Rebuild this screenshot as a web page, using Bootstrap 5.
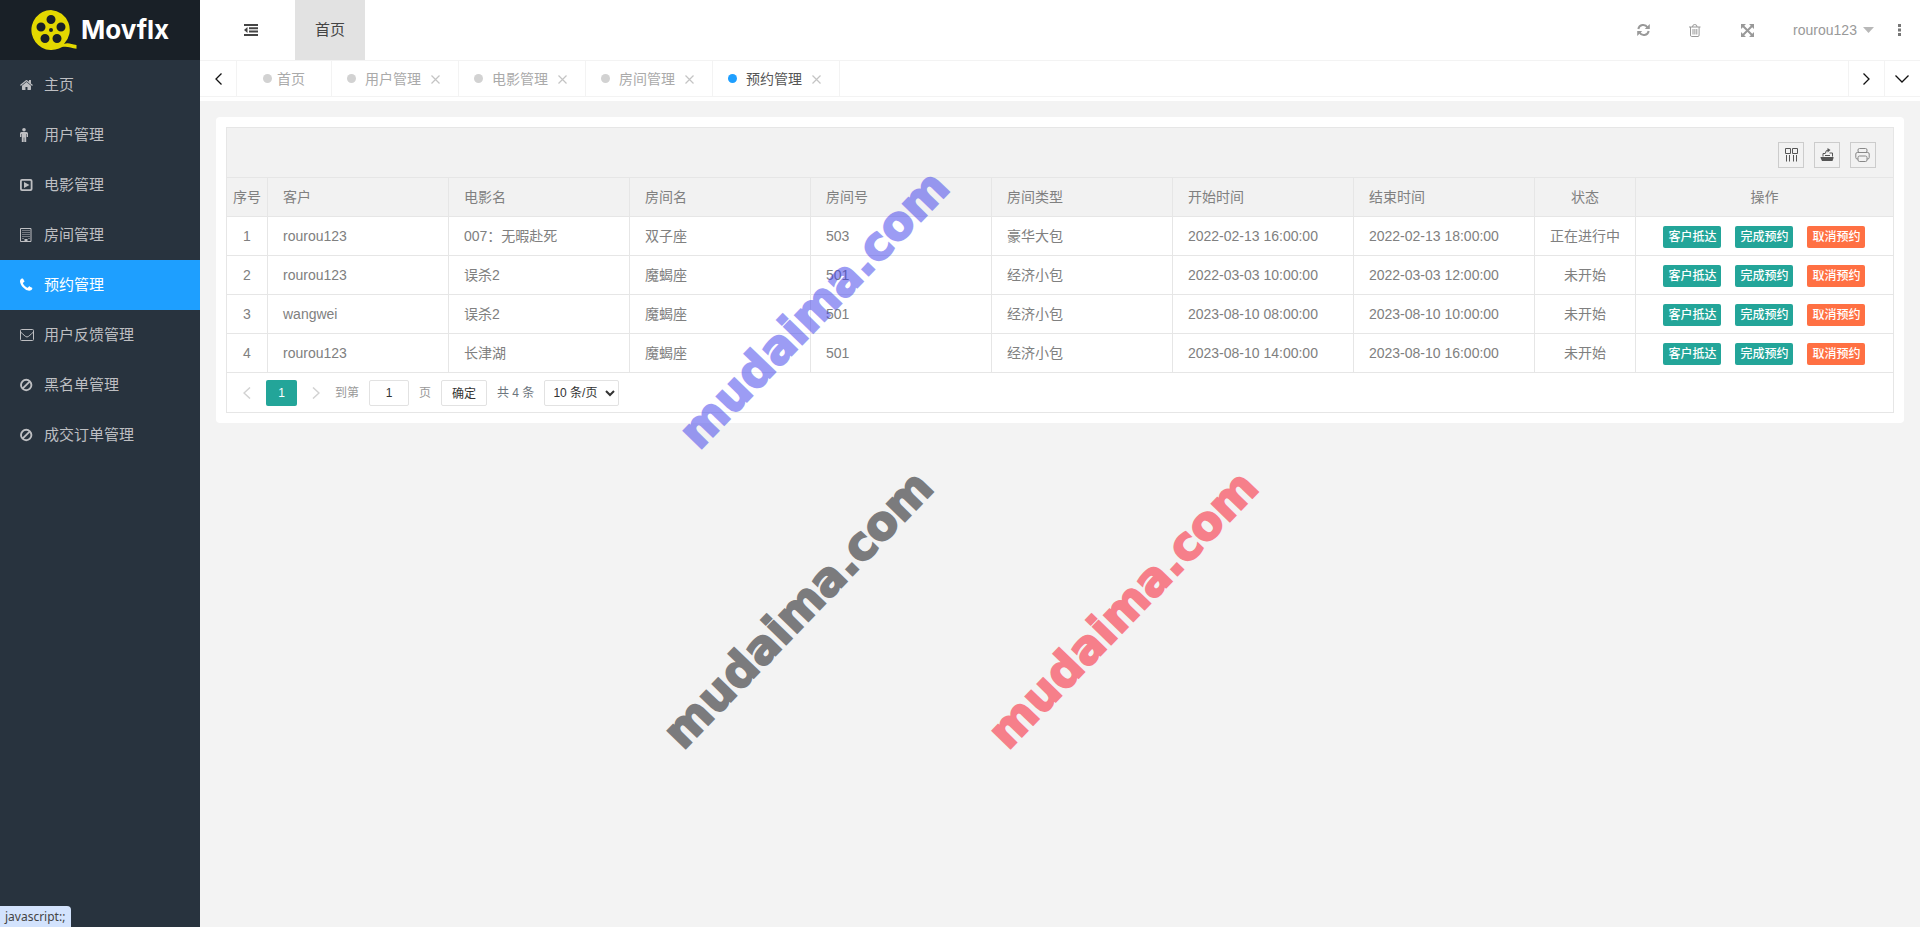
<!DOCTYPE html>
<html lang="zh-CN">
<head>
<meta charset="utf-8">
<meta name="viewport" content="width=device-width, initial-scale=1">
<title>预约管理</title>
<link href="https://cdn.jsdelivr.net/npm/bootstrap@5.3.0/dist/css/bootstrap.min.css" rel="stylesheet">
<style>
body{font-family:"Liberation Sans","Noto Sans CJK SC",sans-serif;font-size:14px;line-height:20px;color:#666;background:#f3f3f3}
svg{display:block;fill:currentColor;flex:none}
button{font-family:inherit}
a{color:inherit;text-decoration:none}
.plain{background:none;border:0;color:inherit;padding:0}
.side{width:200px;background:#28333e}
.logo-bar{height:60px;background:#192027;color:#fff;padding-left:31px;gap:4px}
.logo-word{font:700 26px/30px Inter,sans-serif}
.side .nav-link{height:50px;padding:0 20px;color:#bebfc2;font-size:15px;gap:10px}
.side .nav-link svg{width:14px}
.side .nav-link.active{background:#1e9fff;color:#fff}
.top-bar{height:60px;background:#fff;color:#999}
.fold-btn{width:95px;padding-left:44px;color:#444}
.top-home{padding:0 20px;background:#e2e2e2;color:#444;font-size:15px}
.tool-cell{width:52px}
.user-cell{padding:0 6px 0 20px;gap:6px}
.more-cell{width:40px}
.tab-bar{height:41px;background:#fff;padding-bottom:4px}
.tab-strip{border-top:1px solid #f3f3f3;border-bottom:1px solid #f3f3f3;height:37px}
.edge-btn{width:35px;color:#111}
.edge-btn.start{width:37px;border-right:1px solid #f3f3f3}
.edge-btn.end{width:36px;border-left:1px solid #f3f3f3}
.page-tab{padding:0 18px 0 15px;border-right:1px solid #f3f3f3;color:#aaa}
.page-tab.first{padding-left:26px;padding-right:26px}
.page-tab.current{color:#555}
.dot{width:9px;height:9px;border-radius:50%;background:#d2d2d2;margin-right:9px}
.first .dot{margin-right:5px}
.current .dot{background:#1e9fff}
.tab-close{color:#c4c4c4;margin-left:10px;padding-top:2px}
.content{padding:16px}
.panel{background:#fff;border-radius:4px;padding:10px}
.frame{border:1px solid #e6e6e6}
.grid-tools{height:50px;background:#f2f2f2;border-bottom:1px solid #e6e6e6;padding-right:17px;padding-top:4px;gap:10px}
.grid-tools button{width:26px;height:26px;border:1px solid #ccc;color:#555}
.grid{table-layout:fixed;border-collapse:separate;border-spacing:0;margin:0;color:#808080}
.grid th,.grid td{height:39px;padding:0 15px;border:0;border-bottom:1px solid #e6e6e6;border-right:1px solid #e6e6e6;font-weight:400;color:#808080;vertical-align:middle;white-space:nowrap}
.grid th{background:#f2f2f2}
.grid th:last-child,.grid td:last-child{border-right:0}
.grid .mid{text-align:center;padding:0 5px}
.acts{gap:14px;padding-top:2px}
.act{height:22px;width:58px;padding:0;border:0;border-radius:2px;background:#23a599;color:#fff;font-size:12px;font-weight:500;line-height:22px}
.act.cancel{background:#ff7043}
.pager{height:39px;padding-left:1px;font-size:12px;color:#999}
.pager .cell{width:38px;height:26px;color:#d2d2d2}
.pager .cell.on{width:31px;background:#23a599;color:#fff;border-radius:2px}
.pager .box{height:26px;border:1px solid #e2e2e2;border-radius:2px;background:#fff;color:#333;font:12px "Liberation Sans","Noto Sans CJK SC",sans-serif;margin:0 10px;padding:0}
.pager input.box{width:40px;text-align:center}
.pager button.box{width:46px}
.pager select.box{width:75px;padding:0 4px}
.mark-layer{inset:0;overflow:hidden;pointer-events:none;z-index:5}
.wm{position:absolute;font:700 46px/60px "DejaVu Sans",sans-serif;-webkit-text-stroke:2px currentColor;transform-origin:0 46px;transform:rotate(-46deg);white-space:nowrap}
.wm.blue{color:#3c3ceb;opacity:.5}
.hint{left:0;bottom:0;height:21px;padding:0 6px 0 5px;background:#d3e3fd;color:#444;border-top-right-radius:4px;font:12px/22px "Noto Sans",sans-serif;z-index:9}
</style>
</head>
<body>
<div class="d-flex min-vh-100 position-relative">
<aside class="side flex-shrink-0">
  <a href="#" class="logo-bar d-flex align-items-center">
    <svg width="46" height="42" viewBox="0 0 46 42"><path fill="#e3d800" fill-rule="evenodd" d="M20 1a20 20 0 1 0 8 38.500C34 36 39 39 45.500 39.800V36C40 35 37 33 33 35A20 20 0 0 0 20 1zM20 6a4.500 4.500 0 1 1 0 9 4.500 4.500 0 0 1 0-9zM10 13.500a4.500 4.500 0 1 1 0 9 4.500 4.500 0 0 1 0-9zM30 13.500a4.500 4.500 0 1 1 0 9 4.500 4.500 0 0 1 0-9zM14 25a4.500 4.500 0 1 1 0 9 4.500 4.500 0 0 1 0-9zM26 25a4.500 4.500 0 1 1 0 9 4.500 4.500 0 0 1 0-9zM20 19a2 2 0 1 1 0 4 2 2 0 0 1 0-4z"/></svg>
    <span class="logo-word">Movflx</span>
  </a>
  <nav class="nav flex-column flex-nowrap">
    <a class="nav-link d-flex align-items-center" href="#"><svg height="14" viewBox="90 0 1620 1792"><path d="M1408 992v480q0 26-19 45t-45 19h-384v-384h-256v384h-384q-26 0-45-19t-19-45v-480q0-1 .5-3t.5-3l575-474 575 474q1 2 1 6zm223-69l-62 74q-8 9-21 11h-3q-13 0-21-7l-692-577-692 577q-12 8-24 7-13-2-21-11l-62-74q-8-10-7-23.500t11-21.500l719-599q32-26 76-26t76 26l244 204v-195q0-14 9-23t23-9h192q14 0 23 9t9 23v408l219 182q10 8 11 21.500t-7 23.500z"/></svg>主页</a>
    <a class="nav-link d-flex align-items-center" href="#"><svg height="14" viewBox="0 0 14 14"><circle cx="4" cy="1.800" r="1.800"/><path d="M1.500 4h5Q8 4 8 5.500V9H6.700V6h-.5v8H4.300V9.500h-.6V14H1.800V6h-.5v3H0V5.500Q0 4 1.500 4z"/></svg>用户管理</a>
    <a class="nav-link d-flex align-items-center" href="#"><svg height="14" viewBox="0 0 14 14"><path fill-rule="evenodd" d="M2 1h8.500q2 0 2 2v8q0 2-2 2H2q-2 0-2-2V3q0-2 2-2zm.4 1.800q-.6 0-.6.6v7.200q0 .6.6.6h7.700q.6 0 .6-.6V3.400q0-.6-.6-.6zM4 4l5.500 3L4 10z"/></svg>电影管理</a>
    <a class="nav-link d-flex align-items-center" href="#"><svg height="14" viewBox="0 0 14 14"><path fill="none" stroke="currentColor" d="M.5.5h10.500v13H.5z"/><path d="M2.500 2h1v1h-1zm2 0h1v1h-1zm2 0h1v1h-1zm2 0h1v1h-1zm-6 2h1v1h-1zm2 0h1v1h-1zm2 0h1v1h-1zm2 0h1v1h-1zm-6 2h1v1h-1zm2 0h1v1h-1zm2 0h1v1h-1zm2 0h1v1h-1zm-6 2h1v1h-1zm2 0h1v1h-1zm2 0h1v1h-1zm2 0h1v1h-1zm-6 2h1v1h-1zm6 0h1v1h-1zM4.500 11h3v2h-3z"/></svg>房间管理</a>
    <a class="nav-link active d-flex align-items-center" href="#"><svg height="14" viewBox="192 80 1600 1600"><path d="M1600 1240q0 27-10 70.500t-21 68.500q-21 50-122 106-94 51-186 51-27 0-52.500-3.500t-57.500-12.500-47.500-14.500-55.500-20.500-49-18q-98-35-175-83-128-79-264.500-215.500t-215.500-264.500q-48-77-83-175-3-9-18-49t-20.500-55.500-14.500-47.500-12.500-57.500-3.500-52.500q0-92 51-186 56-101 106-122 25-11 68.500-21t70.500-10q14 0 21 3 18 6 53 76 11 19 30 54t35 63.500 31 53.500q3 4 17.500 25t21.500 35.500 7 28.500q0 20-28.500 50t-62 55-62 53-28.500 46q0 9 5 22.500t8.500 20.500 14 24 11.500 19q76 137 174 235t235 174q2 1 19 11.500t24 14 20.500 8.500 22.500 5q18 0 46-28.500t53-62 55-62 50-28.500q14 0 28.500 7t35.500 21.500 25 17.500q25 15 53.500 31t63.500 35 54 30q70 35 76 53 3 7 3 21z"/></svg>预约管理</a>
    <a class="nav-link d-flex align-items-center" href="#"><svg height="14" viewBox="0 0 14 14"><g fill="none" stroke="currentColor"><rect x=".5" y="1.500" width="13" height="11" rx="1"/><path d="M.5 4C3 6 5.500 9 7 9s4-3 6.500-5"/></g></svg>用户反馈管理</a>
    <a class="nav-link d-flex align-items-center" href="#"><svg height="14" viewBox="0 0 14 14"><g fill="none" stroke="currentColor" stroke-width="1.900"><circle cx="6.200" cy="7" r="5.200"/><path d="M2.500 10.700l7.400-7.400"/></g></svg>黑名单管理</a>
    <a class="nav-link d-flex align-items-center" href="#"><svg height="14" viewBox="0 0 14 14"><g fill="none" stroke="currentColor" stroke-width="1.900"><circle cx="6.200" cy="7" r="5.200"/><path d="M2.500 10.700l7.400-7.400"/></g></svg>成交订单管理</a>
  </nav>
</aside>
<main class="flex-grow-1">
  <header class="top-bar d-flex align-items-stretch">
    <button class="plain fold-btn d-flex align-items-center" aria-label="收起菜单"><svg width="14" height="12" viewBox="0 0 14 12"><path d="M0 0h14v2H0zm5 3.300h9v2H5zm0 3.300h9v2H5zM0 10h14v2H0zM3.500 3v6L0 6z"/></svg></button>
    <a href="#" class="top-home d-flex align-items-center">首页</a>
    <button class="plain tool-cell d-flex align-items-center justify-content-center ms-auto" aria-label="刷新"><svg width="13" height="12" viewBox="0 0 13 12"><path fill="none" stroke="currentColor" stroke-width="2" d="M1.300 5A5 5 0 0 1 10.500 3.500M11.700 7A5 5 0 0 1 2.500 8.500"/><path d="M12.800 0v5H7.800zM.2 12V7h5z"/></svg></button>
    <button class="plain tool-cell d-flex align-items-center justify-content-center" aria-label="清除缓存"><svg width="12" height="13" viewBox="0 0 12 13"><path fill="none" stroke="currentColor" d="M0 3h11.500M3.500 3q0-2.500 2.300-2.500T8 3M1.500 3v8q0 1.500 1 1.500h6.600q1 0 1-1.500V3M4 5v5.500M5.900 5v5.500M7.800 5v5.500"/></svg></button>
    <button class="plain tool-cell d-flex align-items-center justify-content-center" aria-label="全屏"><svg width="13" height="13" viewBox="0 0 13 13"><path d="M0 0h5L0 5zM13 0v5L8 0zM0 13V8l5 5zM13 13H8l5-5z"/><path stroke="currentColor" stroke-width="2" d="M2 2l9 9M11 2l-9 9"/></svg></button>
    <button class="plain user-cell d-flex align-items-center">rourou123<svg width="11" height="6" viewBox="0 0 11 6"><path fill="#b8b8b8" d="M0 0h11L5.500 6z"/></svg></button>
    <button class="plain more-cell d-flex align-items-center justify-content-center" aria-label="更多"><svg width="3" height="12" viewBox="0 0 3 12"><path fill="#777" d="M0 0h3v3H0zm0 4.500h3v3H0zM0 9h3v3H0z"/></svg></button>
  </header>
  <div class="tab-bar">
    <div class="tab-strip d-flex align-items-stretch">
      <button class="plain edge-btn start d-flex align-items-center justify-content-center" aria-label="向左"><svg width="7" height="12" viewBox="0 0 7 12"><path fill="none" stroke="currentColor" stroke-width="1.300" d="M6.500.5L1 6l5.500 5.500"/></svg></button>
      <a href="#" class="page-tab first d-flex align-items-center"><span class="dot"></span>首页</a>
      <a href="#" class="page-tab d-flex align-items-center"><span class="dot"></span>用户管理<span class="tab-close"><svg width="9" height="9" viewBox="0 0 9 9"><path stroke="currentColor" stroke-width="1.200" d="M.5.5l8 8M8.500.5l-8 8"/></svg></span></a>
      <a href="#" class="page-tab d-flex align-items-center"><span class="dot"></span>电影管理<span class="tab-close"><svg width="9" height="9" viewBox="0 0 9 9"><path stroke="currentColor" stroke-width="1.200" d="M.5.5l8 8M8.500.5l-8 8"/></svg></span></a>
      <a href="#" class="page-tab d-flex align-items-center"><span class="dot"></span>房间管理<span class="tab-close"><svg width="9" height="9" viewBox="0 0 9 9"><path stroke="currentColor" stroke-width="1.200" d="M.5.5l8 8M8.500.5l-8 8"/></svg></span></a>
      <a href="#" class="page-tab current d-flex align-items-center"><span class="dot"></span>预约管理<span class="tab-close"><svg width="9" height="9" viewBox="0 0 9 9"><path stroke="currentColor" stroke-width="1.200" d="M.5.5l8 8M8.500.5l-8 8"/></svg></span></a>
      <button class="plain edge-btn end ms-auto d-flex align-items-center justify-content-center" aria-label="向右"><svg width="7" height="12" viewBox="0 0 7 12"><path fill="none" stroke="currentColor" stroke-width="1.300" d="M.5.500L6 6 .5 11.500"/></svg></button>
      <button class="plain edge-btn end d-flex align-items-center justify-content-center" aria-label="页签操作"><svg width="14" height="8" viewBox="0 0 14 8"><path fill="none" stroke="currentColor" stroke-width="1.300" d="M.5.500L7 7 13.500.5"/></svg></button>
    </div>
  </div>
  <div class="content">
    <section class="panel"><div class="frame">
      <div class="grid-tools d-flex align-items-center justify-content-end">
        <button class="plain d-flex align-items-center justify-content-center" aria-label="筛选列"><svg width="14" height="14" viewBox="0 0 14 14"><path fill="none" stroke="currentColor" d="M1.500.500h5v5h-5zM8.500.500h5v5h-5zM2.500 7v6.500M5.500 7v6.500M9.500 7v6.500M12.500 7v6.500"/></svg></button>
        <button class="plain d-flex align-items-center justify-content-center" aria-label="导出"><svg width="14" height="14" viewBox="0 0 14 14"><path d="M1 9h12q.8 0 .6.800L12.500 13H2L.5 9.800Q.3 9 1 9z"/><path fill="none" stroke="currentColor" d="M3 8.500v-3h2.500M12.500 8.500V5h-3M5 7.500h5M5.500 5q0-3 3-3"/><path d="M7.500 0l3 2-3 2.500z"/></svg></button>
        <button class="plain d-flex align-items-center justify-content-center" aria-label="打印"><svg width="15" height="14" viewBox="0 0 15 14"><g fill="none" stroke="#888"><rect x="3" y=".5" width="9" height="4" rx="1.500"/><rect x=".8" y="4.500" width="13.400" height="6.500" rx="1.500"/><rect x="3" y="8" width="9" height="5.500" rx="1.500" fill="#f2f2f2"/></g></svg></button>
      </div>
      <table class="table grid w-100">
        <colgroup><col style="width:41px"><col><col><col><col><col><col><col><col style="width:101px"><col style="width:257px"></colgroup>
        <thead><tr><th class="mid">序号</th><th>客户</th><th>电影名</th><th>房间名</th><th>房间号</th><th>房间类型</th><th>开始时间</th><th>结束时间</th><th class="mid">状态</th><th class="mid">操作</th></tr></thead>
        <tbody>
          <tr><td class="mid">1</td><td>rourou123</td><td>007：无暇赴死</td><td>双子座</td><td>503</td><td>豪华大包</td><td>2022-02-13 16:00:00</td><td>2022-02-13 18:00:00</td><td class="mid">正在进行中</td><td class="mid"><div class="acts d-flex justify-content-center"><button class="act">客户抵达</button><button class="act">完成预约</button><button class="act cancel">取消预约</button></div></td></tr>
          <tr><td class="mid">2</td><td>rourou123</td><td>误杀2</td><td>魔蝎座</td><td>501</td><td>经济小包</td><td>2022-03-03 10:00:00</td><td>2022-03-03 12:00:00</td><td class="mid">未开始</td><td class="mid"><div class="acts d-flex justify-content-center"><button class="act">客户抵达</button><button class="act">完成预约</button><button class="act cancel">取消预约</button></div></td></tr>
          <tr><td class="mid">3</td><td>wangwei</td><td>误杀2</td><td>魔蝎座</td><td>501</td><td>经济小包</td><td>2023-08-10 08:00:00</td><td>2023-08-10 10:00:00</td><td class="mid">未开始</td><td class="mid"><div class="acts d-flex justify-content-center"><button class="act">客户抵达</button><button class="act">完成预约</button><button class="act cancel">取消预约</button></div></td></tr>
          <tr><td class="mid">4</td><td>rourou123</td><td>长津湖</td><td>魔蝎座</td><td>501</td><td>经济小包</td><td>2023-08-10 14:00:00</td><td>2023-08-10 16:00:00</td><td class="mid">未开始</td><td class="mid"><div class="acts d-flex justify-content-center"><button class="act">客户抵达</button><button class="act">完成预约</button><button class="act cancel">取消预约</button></div></td></tr>
        </tbody>
      </table>
      <div class="pager d-flex align-items-center">
        <button class="plain cell d-flex align-items-center justify-content-center" aria-label="上一页"><svg width="8" height="12" viewBox="0 0 8 12"><path fill="none" stroke="currentColor" stroke-width="1.500" d="M7 .5L1 6l6 5.500"/></svg></button>
        <button class="plain cell on">1</button>
        <button class="plain cell d-flex align-items-center justify-content-center" aria-label="下一页"><svg width="8" height="12" viewBox="0 0 8 12"><path fill="none" stroke="currentColor" stroke-width="1.500" d="M1 .5L7 6l-6 5.500"/></svg></button>
        <label for="pageNo">到第</label><input id="pageNo" class="box" type="text" value="1"><span>页</span>
        <button class="box">确定</button><span class="text-secondary">共 4 条</span>
        <select class="box" aria-label="每页条数"><option>10 条/页</option><option>20 条/页</option></select>
      </div>
    </div></section>
  </div>
</main>
<div class="mark-layer position-absolute" aria-hidden="true">
  <span class="wm blue" style="left:699px;top:405px">mudaima.com</span>
  <span class="wm" style="left:683px;top:705px;color:#7b7b7d">mudaima.com</span>
  <span class="wm" style="left:1008px;top:705px;color:#f67f8a">mudaima.com</span>
</div>
</div>
<div class="hint position-fixed">javascript:;</div>
<script src="https://cdn.jsdelivr.net/npm/bootstrap@5.3.0/dist/js/bootstrap.bundle.min.js"></script>
</body>
</html>
